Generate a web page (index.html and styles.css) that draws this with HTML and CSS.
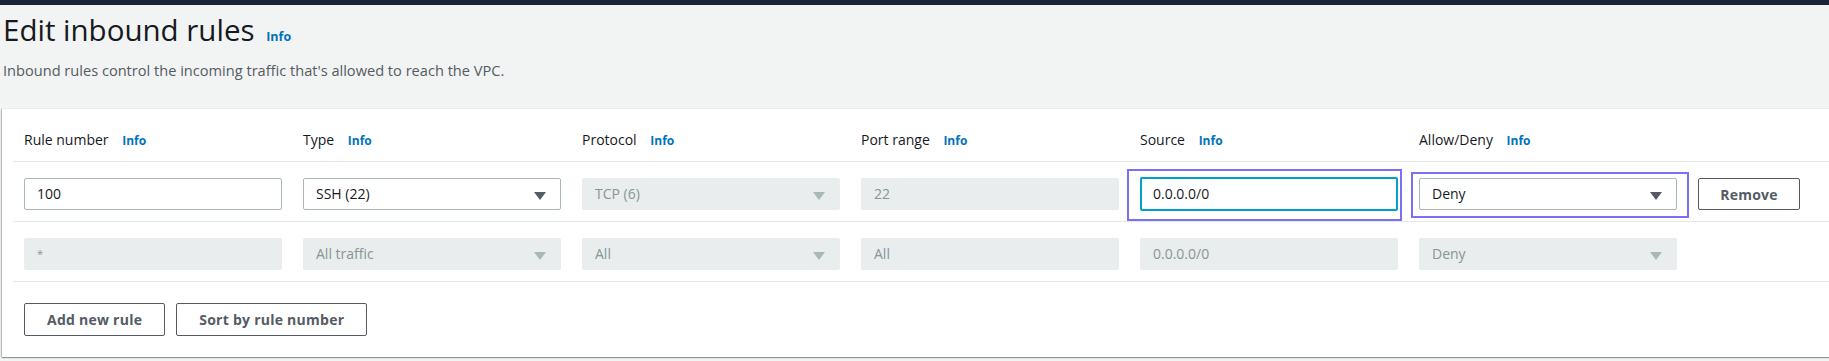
FILE: index.html
```html
<!DOCTYPE html>
<html lang="en">
<head>
<meta charset="utf-8">
<title>Edit inbound rules</title>
<link rel="stylesheet" href="styles.css">
</head>
<body>
<div class="topbar"></div>
<header class="page-head">
  <h1 class="title">Edit inbound rules <a class="info info-title">Info</a></h1>
  <p class="desc">Inbound rules control the incoming traffic that's allowed to reach the VPC.</p>
</header>
<section class="card">
  <div class="row row-head">
    <div class="label">Rule number <a class="info">Info</a></div>
    <div class="label">Type <a class="info">Info</a></div>
    <div class="label">Protocol <a class="info">Info</a></div>
    <div class="label">Port range <a class="info">Info</a></div>
    <div class="label">Source <a class="info">Info</a></div>
    <div class="label">Allow/Deny <a class="info">Info</a></div>
  </div>
  <div class="row">
    <div class="field">100</div>
    <div class="field select">SSH (22)<span class="caret"></span></div>
    <div class="field disabled select">TCP (6)<span class="caret"></span></div>
    <div class="field disabled">22</div>
    <div class="cell">
      <div class="field focused">0.0.0.0/0</div>
      <span class="mark mark-source"></span>
    </div>
    <div class="cell">
      <div class="field select">Deny<span class="caret"></span></div>
      <span class="mark mark-deny"></span>
    </div>
    <button class="btn btn-remove">Remove</button>
  </div>
  <div class="row">
    <div class="field disabled star">*</div>
    <div class="field disabled select">All traffic<span class="caret"></span></div>
    <div class="field disabled select">All<span class="caret"></span></div>
    <div class="field disabled">All</div>
    <div class="field disabled">0.0.0.0/0</div>
    <div class="field disabled select">Deny<span class="caret"></span></div>
  </div>
  <div class="actions">
    <button class="btn btn-add">Add new rule</button>
    <button class="btn btn-sort">Sort by rule number</button>
  </div>
</section>
</body>
</html>
```

FILE: styles.css
```css
html, body {
  margin: 0;
  padding: 0;
}
body {
  background: #f2f3f3;
  font-family: "Open Sans", "Noto Sans", sans-serif;
  color: #16191f;
  overflow: hidden;
  width: 1829px;
  height: 361px;
}
.topbar {
  height: 5px;
  background: #1a2438;
}
.page-head {
  padding: 0 0 0 3px;
  height: 104px;
}
.title {
  margin: 0;
  padding-top: 5px;
  font-size: 29.5px;
  line-height: 40px;
  font-weight: 400;
  color: #16191f;
}
.info {
  color: #0073bb;
  font-size: 12px;
  font-weight: 700;
  line-height: 1;
  margin-left: 10px;
  letter-spacing: 0;
}
.info-title {
  font-size: 12.5px;
  margin-left: 4px;
}
.desc {
  margin: 10px 0 0 0;
  font-size: 14.6px;
  line-height: 20px;
  color: #545b64;
}
.card {
  margin-left: 2px;
  margin-right: -20px;
  background: #fff;
  box-shadow: 0 1px 1px 0 rgba(0, 28, 36, 0.4), -1px 0 1px 0 rgba(0, 28, 36, 0.2);
}
.row {
  margin-left: 11px;
  display: grid;
  grid-template-columns: repeat(6, 258px) 102px;
  column-gap: 21px;
  padding: 16px 11px 11px 11px;
  border-bottom: 1px solid #e6e9e9;
}
.row-head {
  padding-top: 21px;
  padding-bottom: 11px;
}
.label {
  font-size: 14px;
  line-height: 20px;
  color: #16191f;
}
.cell {
  position: relative;
}
.field {
  box-sizing: border-box;
  height: 32px;
  border: 1px solid #aab7b8;
  border-radius: 2px;
  padding: 0 12px;
  font-size: 14px;
  line-height: 30px;
  color: #16191f;
  background: #fff;
  position: relative;
}
.select {
  padding-right: 36px;
}
.caret {
  position: absolute;
  right: 14px;
  top: 13px;
  width: 0;
  height: 0;
  border-left: 6px solid transparent;
  border-right: 6px solid transparent;
  border-top: 8px solid #545b64;
}
.disabled {
  background: #eaeded;
  border-color: #eaeded;
  color: #879596;
}
.disabled .caret {
  border-top-color: #aab7b8;
}
.star {
  font-size: 11px;
}
.focused {
  border: 2px solid #00a1c9;
  padding-left: 11px;
  line-height: 30px;
  height: 34px;
  margin: -1px 0;
}
.mark {
  position: absolute;
  border: 2px solid #7b6ff5;
  pointer-events: none;
}
.mark-source {
  left: -13px;
  right: -4px;
  top: -9px;
  bottom: -11px;
}
.mark-deny {
  left: -8px;
  right: -12px;
  top: -6px;
  bottom: -8px;
}
.btn {
  box-sizing: border-box;
  height: 33px;
  background: #fff;
  border: 1px solid #545b64;
  border-radius: 2px;
  color: #545b64;
  font-family: "Open Sans", "Noto Sans", sans-serif;
  font-size: 14px;
  font-weight: 700;
  letter-spacing: 0.25px;
  padding: 0 22px;
  cursor: pointer;
}
.btn-remove {
  height: 32px;
  padding: 0;
}
.actions {
  display: flex;
  gap: 11px;
  padding: 21px 0 21px 22px;
}
```
